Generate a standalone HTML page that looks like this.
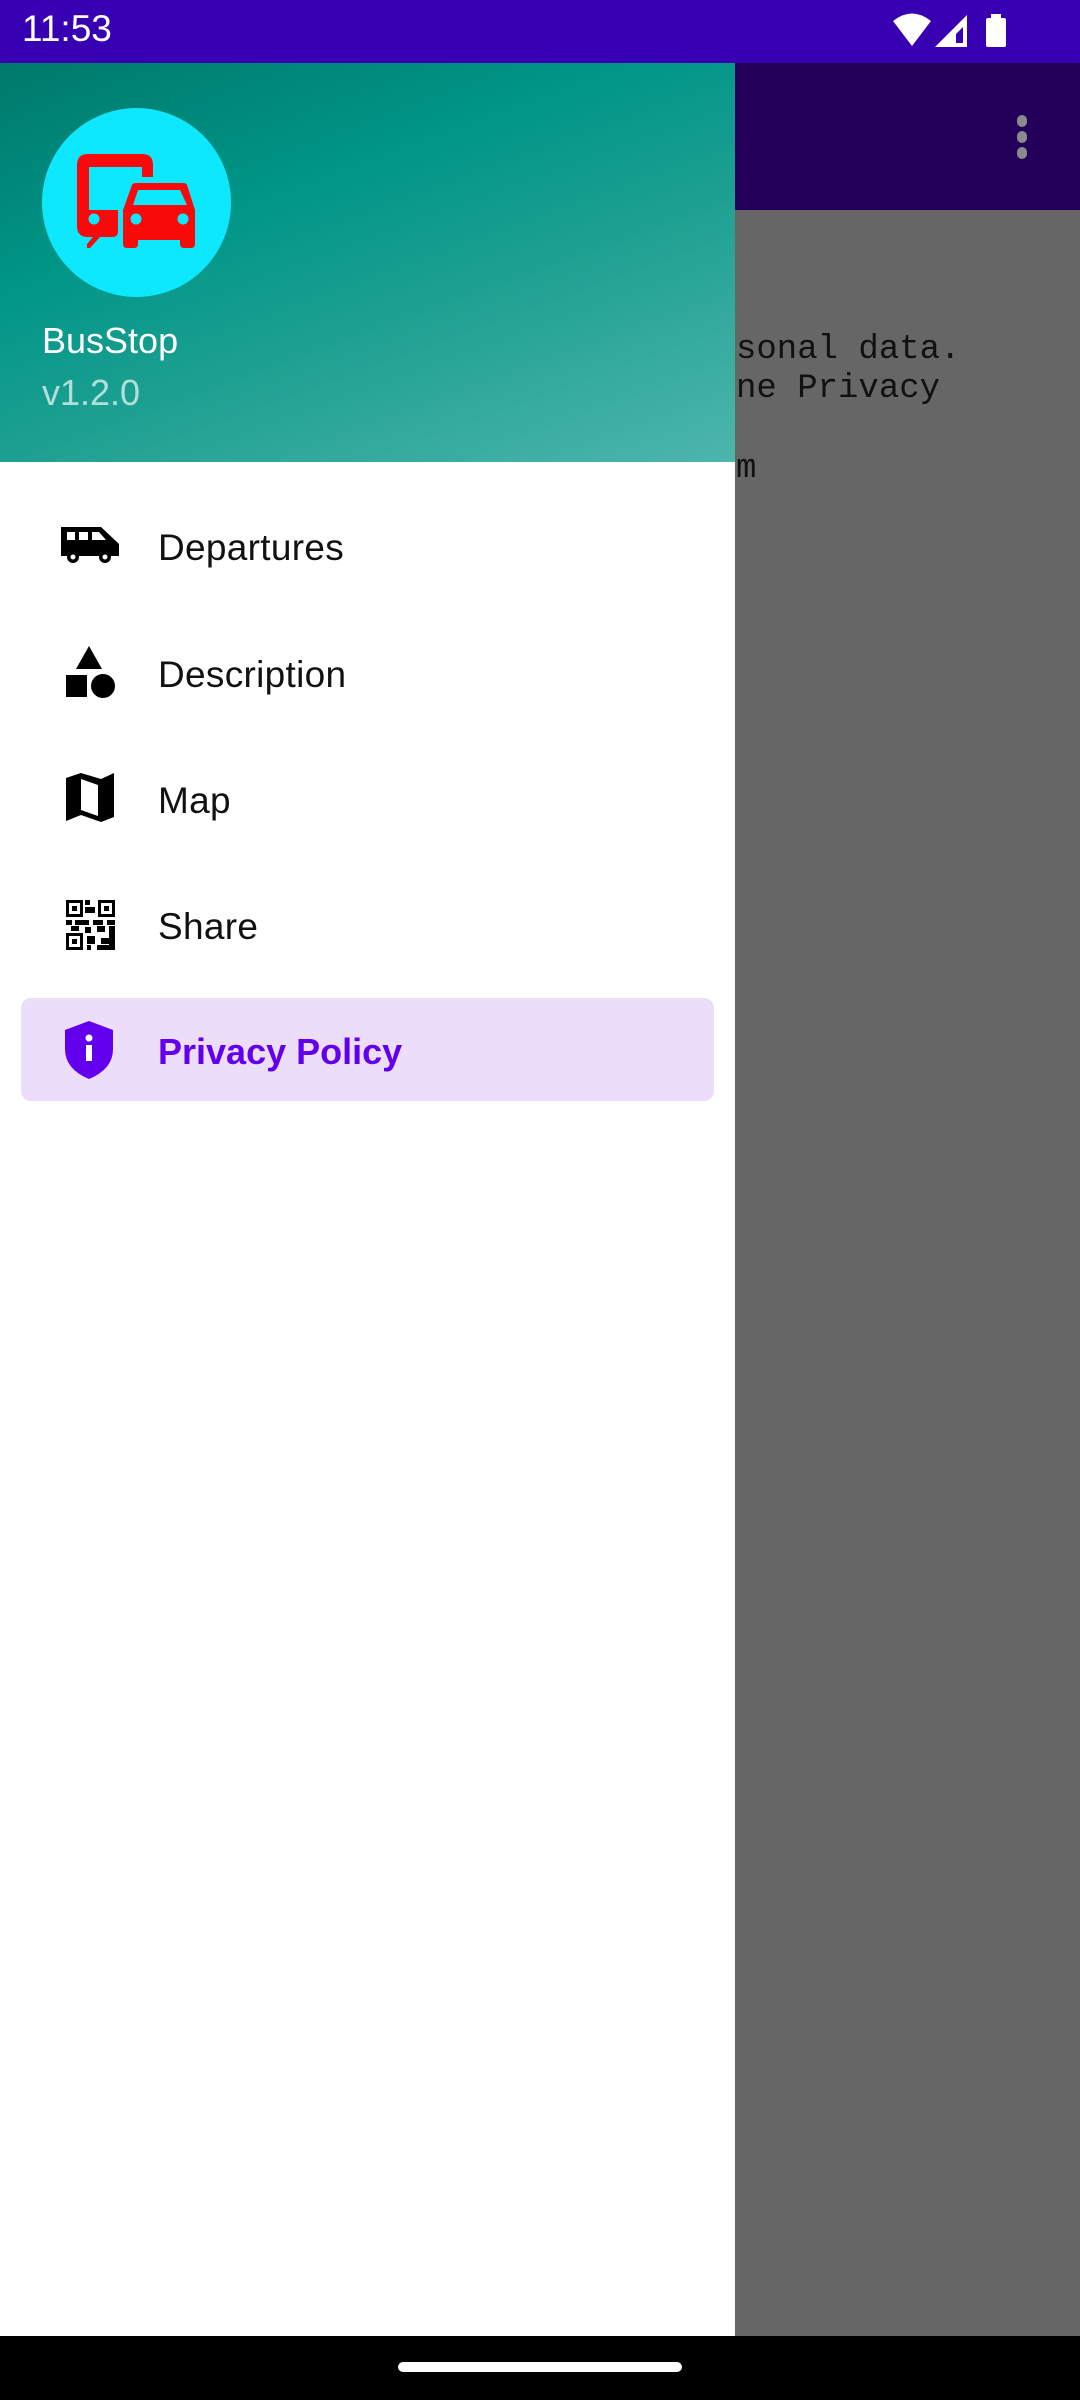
<!DOCTYPE html>
<html><head><meta charset="utf-8"><style>
*{margin:0;padding:0;box-sizing:border-box}
body{width:1080px;height:2400px;position:relative;overflow:hidden;background:#666;font-family:"Liberation Sans",Roboto,sans-serif}
.abs{position:absolute}
.sb{left:0;top:0;width:1080px;height:63px;background:#3700b3}
.time{left:22px;top:8px;color:#fff;font-size:37px}
.tb{left:735px;top:63px;width:345px;height:147px;background:#23005a}
.dot{width:10px;height:12px;border-radius:6px;background:#8a8a8a;left:1017px}
.mono{font-family:"Liberation Mono","DejaVu Sans Mono",monospace;font-size:34px;color:#111;left:736px;white-space:pre}
.drawer{left:0;top:63px;width:735px;height:2273px;background:#fff}
.hdr{left:0;top:63px;width:735px;height:399px;background:linear-gradient(160deg,#00796b 0%,#009688 35%,#1ea091 60%,#4db6ac 100%)}
.lbl{left:158px;font-size:37px;color:#111;font-weight:500;letter-spacing:0.3px}
.ic{left:61px}
.nav{left:0;top:2336px;width:1080px;height:64px;background:#000}
</style></head><body>
<div class="abs sb"></div>
<div class="abs time">11:53</div>
<svg class="abs" style="left:890px;top:12px" width="130" height="40" viewBox="0 0 130 40">
<path d="M3 9 Q22 -6 41 9 L22 34 Z" fill="#fff"/>
<path d="M45 35 L77 3 L77 35 Z" fill="#fff"/><path d="M66 22 L73 15 L73 31 L66 31 Z" fill="#3700b3"/>
<rect x="96" y="6" width="20" height="29" rx="2" fill="#fff"/><rect x="101" y="2" width="10" height="5" fill="#fff"/>
</svg>
<div class="abs tb"></div>
<div class="abs dot" style="top:115px"></div><div class="abs dot" style="top:131px"></div><div class="abs dot" style="top:147px"></div>
<div class="abs mono" style="top:331px">sonal data.</div>
<div class="abs mono" style="top:370px">ne Privacy</div>
<div class="abs mono" style="top:450px">m</div>

<div class="abs drawer"></div>
<div class="abs hdr"></div>
<div class="abs" style="left:42px;top:108px;width:189px;height:189px;border-radius:50%;background:#0de8ff"></div>
<svg class="abs" style="left:60px;top:140px" width="150" height="120" viewBox="0 0 150 120">
<path d="M17 25 Q17 14 28 14 L82 14 Q93 14 93 25 L93 37 L82 37 L82 27 L29 27 L29 70 L58 70 L58 92 Q58 97 52 97 L40 97 L30 108 L27 108 L27 104 L33 97 L28 97 Q17 97 17 86 Z" fill="#f80a0a"/>
<circle cx="34" cy="79" r="5.5" fill="#0de8ff"/>
<path d="M72 45 Q73 43 76 43 L123 43 Q126 43 127 45 L135 70 L135 104 Q135 108 131 108 L124 108 Q120 108 120 104 L120 100 L78 100 L78 104 Q78 108 74 108 L67 108 Q63 108 63 104 L63 70 Z" fill="#f80a0a"/>
<path d="M78 50 L120 50 L127 65 L73 65 Z" fill="#0de8ff"/>
<circle cx="76" cy="79" r="5.5" fill="#0de8ff"/><circle cx="123" cy="79" r="5.5" fill="#0de8ff"/>
</svg>
<div class="abs" style="left:42px;top:320px;color:#fff;font-size:36px">BusStop</div>
<div class="abs" style="left:42px;top:372px;color:#b2dfdb;font-size:36px">v1.2.0</div>

<svg class="abs ic" style="top:527px" width="58" height="38" viewBox="0 0 58 38">
<path d="M0 0 L40 0 L58 17 L58 29 L0 29 Z" fill="#000"/>
<rect x="6" y="5" width="8" height="8" fill="#fff"/><rect x="18" y="5" width="9" height="8" fill="#fff"/><path d="M31 5 L38 5 L45 13 L31 13 Z" fill="#fff"/>
<circle cx="12" cy="30" r="6" fill="#000"/><circle cx="12" cy="30" r="2.5" fill="#fff"/>
<circle cx="44" cy="30" r="6" fill="#000"/><circle cx="44" cy="30" r="2.5" fill="#fff"/>
</svg>
<div class="abs lbl" style="top:527px">Departures</div>

<svg class="abs ic" style="top:646px" width="56" height="56" viewBox="0 0 56 56">
<path d="M28 0 L41 23 L15 23 Z" fill="#000"/><rect x="5" y="29" width="21" height="22" fill="#000"/><circle cx="42" cy="40" r="12" fill="#000"/>
</svg>
<div class="abs lbl" style="top:654px">Description</div>

<svg class="abs ic" style="top:773px" width="56" height="52" viewBox="0 0 56 52">
<path d="M5 5 L20 0 L40 6 L53 0 L53 44 L40 49 L20 42 L5 48 Z" fill="#000"/><path d="M20 6 L20 37 L37 43 L37 12 Z" fill="#fff"/>
</svg>
<div class="abs lbl" style="top:780px">Map</div>

<svg class="abs ic" style="top:900px" width="56" height="50" viewBox="0 0 56 50">
<g fill="#000">
<rect x="5" y="0" width="17" height="17"/><rect x="37" y="0" width="17" height="17"/><rect x="5" y="33" width="17" height="17"/>
<rect x="24" y="0" width="5" height="5"/><rect x="24" y="7" width="10" height="6"/><rect x="5" y="20" width="6" height="5"/><rect x="14" y="20" width="14" height="5"/><rect x="32" y="20" width="10" height="5"/><rect x="46" y="20" width="8" height="5"/>
<rect x="10" y="26" width="8" height="5"/><rect x="24" y="27" width="6" height="6"/><rect x="36" y="26" width="8" height="6"/><rect x="48" y="26" width="6" height="24"/>
<rect x="26" y="36" width="8" height="8"/><rect x="40" y="38" width="8" height="6"/><rect x="26" y="45" width="4" height="5"/><rect x="36" y="45" width="18" height="5"/></g>
<g fill="#fff"><rect x="8" y="3" width="11" height="11"/><rect x="40" y="3" width="11" height="11"/><rect x="8" y="36" width="11" height="11"/></g>
<g fill="#000"><rect x="11" y="6" width="5" height="5"/><rect x="43" y="6" width="5" height="5"/><rect x="11" y="39" width="5" height="5"/></g>
</svg>
<div class="abs lbl" style="top:906px">Share</div>

<div class="abs" style="left:21px;top:998px;width:693px;height:103px;border-radius:10px;background:#ecddfa"></div>
<svg class="abs ic" style="top:1021px" width="56" height="58" viewBox="0 0 56 58">
<path d="M28 0 L52 9 L52 28 Q52 48 28 58 Q4 48 4 28 L4 9 Z" fill="#6200ee"/>
<circle cx="28" cy="17" r="3.5" fill="#fff"/><rect x="25" y="24" width="6" height="16" fill="#fff"/>
</svg>
<div class="abs lbl" style="top:1031px;color:#6200ee;font-weight:700;letter-spacing:0;font-size:36px">Privacy Policy</div>

<div class="abs nav"></div>
<div class="abs" style="left:398px;top:2362px;width:284px;height:10px;border-radius:5px;background:#fff"></div>
</body></html>
